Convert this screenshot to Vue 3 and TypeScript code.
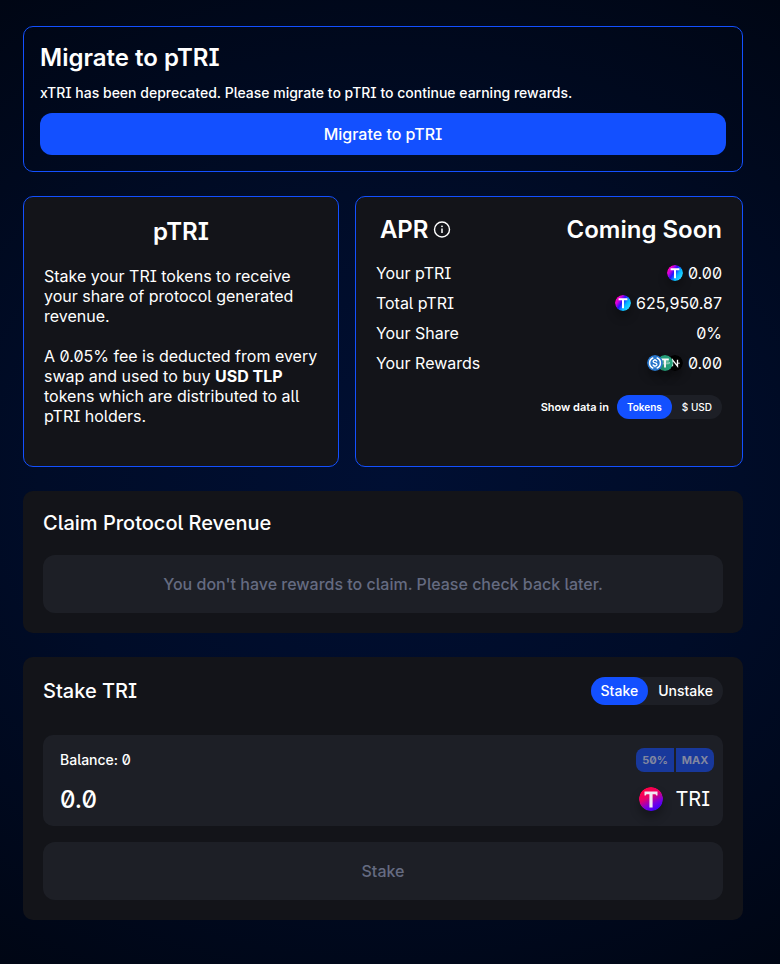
<script setup lang="ts">
import { ref } from 'vue'

type Unit = 'Tokens' | '$ USD'
type Mode = 'Stake' | 'Unstake'
type Coin = 'ptri' | 'usdc' | 'usdt' | 'near'

interface Stat {
  label: string
  value: string
  coins: Coin[]
}

const units: Unit[] = ['Tokens', '$ USD']
const modes: Mode[] = ['Stake', 'Unstake']

const unit = ref<Unit>('Tokens')
const mode = ref<Mode>('Stake')
const amount = ref('')

const stats: Stat[] = [
  { label: 'Your pTRI', value: '0.00', coins: ['ptri'] },
  { label: 'Total pTRI', value: '625,950.87', coins: ['ptri'] },
  { label: 'Your Share', value: '0%', coins: [] },
  { label: 'Your Rewards', value: '0.00', coins: ['usdc', 'usdt', 'near'] },
]
</script>

<template>
  <main class="page">
    <svg class="defs" width="0" height="0" aria-hidden="true">
      <defs>
        <linearGradient id="ptri-fill" x1="0.15" y1="0.15" x2="0.9" y2="0.65">
          <stop offset="0" stop-color="#ff00b8" />
          <stop offset="0.2" stop-color="#d000e0" />
          <stop offset="0.45" stop-color="#2a10ff" />
          <stop offset="0.75" stop-color="#00b4ff" />
          <stop offset="1" stop-color="#20d0ff" />
        </linearGradient>
        <linearGradient id="tri-fill" x1="0.3" y1="0.1" x2="0.75" y2="0.95">
          <stop offset="0" stop-color="#ff0048" />
          <stop offset="0.35" stop-color="#e8006c" />
          <stop offset="0.7" stop-color="#7a00e0" />
          <stop offset="1" stop-color="#3a00ff" />
        </linearGradient>
      </defs>
    </svg>

    <section class="card outlined migrate">
      <h2 class="title">Migrate to pTRI</h2>
      <p class="note">xTRI has been deprecated. Please migrate to pTRI to continue earning rewards.</p>
      <button type="button" class="primary">Migrate to pTRI</button>
    </section>

    <div class="columns">
      <section class="card outlined filled about">
        <h2 class="title">pTRI</h2>
        <p>Stake your TRI tokens to receive your share of protocol generated revenue.</p>
        <p>
          A 0.05% fee is deducted from every swap and used to buy <strong>USD TLP</strong> tokens
          which are distributed to all pTRI holders.
        </p>
      </section>

      <section class="card outlined filled summary">
        <div class="apr">
          <h2 class="title apr-name">
            APR
            <svg class="info" viewBox="0 0 18 18" aria-hidden="true">
              <circle cx="9" cy="8.5" r="7.5" fill="none" stroke="currentColor" stroke-width="1.4" />
              <path d="M9 7.5v4.6" stroke="currentColor" stroke-width="1.5" />
              <circle cx="9" cy="5.3" r="0.9" fill="currentColor" />
            </svg>
          </h2>
          <span class="title">Coming Soon</span>
        </div>

        <dl class="stats">
          <div v-for="stat in stats" :key="stat.label" class="stat">
            <dt>{{ stat.label }}</dt>
            <dd>
              <span v-if="stat.coins.length" class="coins">
                <svg v-for="coin in stat.coins" :key="coin" class="coin" viewBox="0 0 16 16" aria-hidden="true">
                  <template v-if="coin === 'ptri'">
                    <circle cx="8" cy="8" r="8" fill="url(#ptri-fill)" />
                    <path d="M3.6 4.2h8.8M8 4.2v9" fill="none" stroke="#fff" stroke-width="2" />
                  </template>
                  <template v-else-if="coin === 'usdc'">
                    <circle cx="8" cy="8" r="8" fill="#2775ca" />
                    <path
                      d="M6.3 2.8a5.5 5.5 0 0 0 0 10.4M9.7 2.8a5.5 5.5 0 0 1 0 10.4"
                      fill="none"
                      stroke="#fff"
                      stroke-width="1.5"
                    />
                    <path
                      d="M9.9 6.5C9.7 5.5 9 5.1 8 5.1c-1.2 0-1.9.6-1.9 1.4 0 2 3.9.9 3.9 3 0 .9-.8 1.5-2 1.5-1.2 0-1.9-.5-2.1-1.5M8 3.9v1.2M8 11v1.2"
                      fill="none"
                      stroke="#fff"
                      stroke-width="1.3"
                    />
                  </template>
                  <template v-else-if="coin === 'usdt'">
                    <circle cx="8" cy="8" r="8" fill="#26a17b" />
                    <path d="M4.2 4.4h7.6M8 4.4v8.2" fill="none" stroke="#fff" stroke-width="2" />
                    <ellipse cx="8" cy="7.9" rx="4.8" ry="1" fill="none" stroke="#fff" stroke-width="0.6" />
                  </template>
                  <template v-else>
                    <circle cx="8" cy="8" r="8" fill="#000" />
                    <path d="M5.500 11.200V4.800l5 6.400V4.800" fill="none" stroke="#fff" stroke-width="1.300" />
                    <path d="M3.500 7.200h2.500M9.800 8.200h3" stroke="#fff" stroke-width="0.900" />
                  </template>
                </svg>
              </span>
              {{ stat.value }}
            </dd>
          </div>
        </dl>

        <div class="units">
          <span id="unit-label">Show data in</span>
          <div class="toggle small" role="group" aria-labelledby="unit-label">
            <button
              v-for="item in units"
              :key="item"
              type="button"
              :class="{ active: unit === item }"
              :aria-pressed="unit === item"
              @click="unit = item"
            >
              {{ item }}
            </button>
          </div>
        </div>
      </section>
    </div>

    <section class="card filled panel">
      <h3 class="subtitle">Claim Protocol Revenue</h3>
      <button type="button" class="muted" disabled>
        You don't have rewards to claim. Please check back later.
      </button>
    </section>

    <section class="card filled panel">
      <header class="stake-head">
        <h3 class="subtitle">Stake TRI</h3>
        <div class="toggle">
          <button
            v-for="item in modes"
            :key="item"
            type="button"
            :class="{ active: mode === item }"
            :aria-pressed="mode === item"
            @click="mode = item"
          >
            {{ item }}
          </button>
        </div>
      </header>

      <div class="field">
        <div class="field-row">
          <label for="amount">Balance: 0</label>
          <div class="shares">
            <button type="button" disabled>50%</button>
            <button type="button" disabled>MAX</button>
          </div>
        </div>
        <div class="field-row">
          <input id="amount" v-model="amount" type="text" inputmode="decimal" placeholder="0.0" />
          <span class="token">
            <svg class="token-icon" viewBox="0 0 24 24" aria-hidden="true">
              <circle cx="12" cy="12" r="12" fill="url(#tri-fill)" />
              <path d="M5.5 4.500h13v4h-1.200l-.8-1.300h-2.900v13.300h-3.200V7.200H7.500L6.700 8.500H5.500z" fill="#f1e8f4" />
            </svg>
            TRI
          </span>
        </div>
      </div>

      <button type="button" class="muted" disabled>Stake</button>
    </section>
  </main>
</template>

<style>
body {
  margin: 0;
  background: #000614;
}
</style>

<style scoped>
.page {
  box-sizing: border-box;
  min-height: 100vh;
  padding: 26px 37px 44px 23px;
  display: flex;
  flex-direction: column;
  gap: 24px;
  background: radial-gradient(ellipse 90% 60% at 50% 50%, #000f33 0%, #000c28 50%, #000614 100%);
  color: #fff;
  font-family: Inter, 'Liberation Sans', sans-serif;
  font-feature-settings: 'ss02' 1, 'zero' 1;
  font-size: 16px;
  line-height: 20px;
}

.defs {
  position: absolute;
}

h2,
h3,
p,
dl,
dd {
  margin: 0;
}

button,
input {
  font: inherit;
  font-feature-settings: inherit;
  color: inherit;
  border: 0;
  padding: 0;
  background: none;
}

button:not(:disabled) {
  cursor: pointer;
}

.card {
  border-radius: 10px;
}

.outlined {
  border: 1px solid #1350ff;
}

.filled {
  background: #131419;
}

.title {
  font-size: 24px;
  font-weight: 600;
  line-height: 29px;
}

.subtitle {
  font-size: 20px;
  font-weight: 500;
  line-height: 24px;
}

.migrate {
  padding: 16px;
  display: flex;
  flex-direction: column;
  gap: 12px;
}

.note {
  font-size: 14px;
  font-weight: 500;
  line-height: 17px;
}

.primary {
  height: 42px;
  border-radius: 12px;
  background: #1350ff;
  font-weight: 500;
}

.columns {
  display: grid;
  grid-template-columns: 35fr 43fr;
  gap: 16px;
}

.about {
  padding: 20px 20px 40px;
  display: flex;
  flex-direction: column;
  gap: 20px;
}

.about .title {
  text-align: center;
}

.about strong {
  font-weight: 700;
}

.summary {
  padding: 18px 20px 20px;
}

.apr {
  display: flex;
  justify-content: space-between;
  padding-left: 4px;
}

.apr-name {
  display: flex;
  align-items: center;
  gap: 4px;
}

.info {
  width: 18px;
  height: 18px;
}

.stats {
  margin-top: 19px;
  display: flex;
  flex-direction: column;
  gap: 10px;
}

.stat,
.stat dd {
  display: flex;
  align-items: center;
}

.stat {
  justify-content: space-between;
}

.stat dd {
  gap: 5px;
}

.coins {
  display: flex;
  isolation: isolate;
}

.coin {
  width: 16px;
  height: 16px;
  border-radius: 50%;
  box-shadow: 0 6px 10px rgba(0, 0, 0, 0.3);
}

.coin:nth-child(1) {
  z-index: 2;
}

.coin:nth-child(2) {
  z-index: 1;
}

.coin + .coin {
  margin-left: -6px;
}

.units {
  margin-top: 22px;
  display: flex;
  justify-content: flex-end;
  align-items: center;
  gap: 8px;
  font-size: 11px;
  font-weight: 600;
}

.toggle {
  display: flex;
  border-radius: 14px;
  background: #1d1f26;
  font-size: 14px;
  font-weight: 500;
}

.toggle button {
  height: 28px;
  padding: 0 10px;
  border-radius: 14px;
}

.toggle .active {
  background: #1350ff;
}

.toggle.small {
  font-size: 10px;
}

.toggle.small button {
  height: 24px;
}

.toggle.small .active {
  font-weight: 600;
}

.panel {
  padding: 20px;
  display: flex;
  flex-direction: column;
}

.muted {
  height: 58px;
  border-radius: 12px;
  background: #1d1f26;
  color: #656b81;
  font-weight: 500;
}

.subtitle + .muted {
  margin-top: 20px;
}

.stake-head {
  display: flex;
  justify-content: space-between;
  align-items: center;
  margin-bottom: 30px;
}

.field {
  margin-bottom: 16px;
  padding: 13px 9px 13px 17px;
  border-radius: 10px;
  background: #1d1f26;
  display: flex;
  flex-direction: column;
  gap: 13px;
}

.field-row {
  display: flex;
  justify-content: space-between;
  align-items: center;
}

.field-row label {
  font-size: 14px;
  font-weight: 500;
}

.shares {
  display: flex;
  gap: 2px;
}

.shares button {
  width: 38px;
  height: 24px;
  background: #18389b;
  color: #8287a0;
  font-size: 11px;
  font-weight: 700;
}

.shares button:first-child {
  border-radius: 8px 0 0 8px;
}

.shares button:last-child {
  border-radius: 0 8px 8px 0;
}

.field input {
  flex: 1;
  min-width: 0;
  height: 28px;
  font-size: 24px;
  font-weight: 500;
  outline: none;
}

.field input::placeholder {
  color: #fff;
  opacity: 1;
}

.token {
  display: flex;
  align-items: center;
  gap: 12px;
  padding-right: 4px;
  font-size: 20px;
}

.token-icon {
  width: 24px;
  height: 24px;
  border-radius: 50%;
  box-shadow: 0 6px 10px rgba(0, 0, 0, 0.3);
}
</style>
